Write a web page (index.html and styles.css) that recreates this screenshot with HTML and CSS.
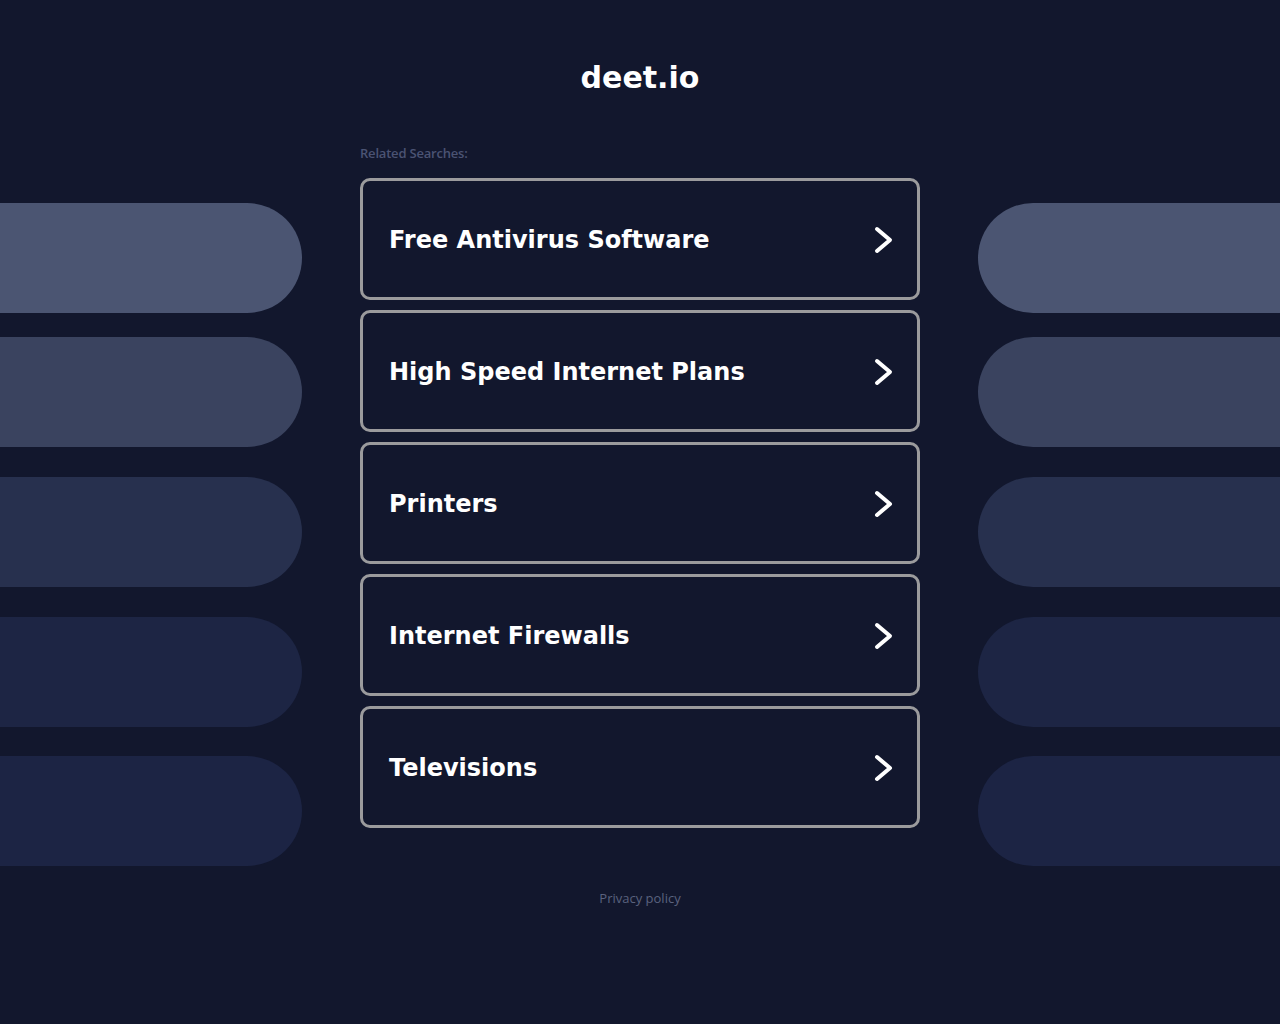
FILE: index.html
```html
<!DOCTYPE html>
<html>
<head>
	<title>deet.io</title>
	<link rel="stylesheet" href="styles.css">
</head>
<body>
<div class="page">
	<h1 class="title">deet.io</h1>

	<div class="layout">
		<ul class="pills pills-left">
			<li class="p1"></li>
			<li class="p2"></li>
			<li class="p3"></li>
			<li class="p4"></li>
			<li class="p5"></li>
		</ul>

		<div class="main">
			<p class="label">Related Searches:</p>
			<ul class="links">
				<li><a href="javascript:void(0)"><span>Free Antivirus Software</span><svg class="arrow" viewBox="0 0 20 28"><polyline points="4,3 17,14 4,25"/></svg></a></li>
				<li><a href="javascript:void(0)"><span>High Speed Internet Plans</span><svg class="arrow" viewBox="0 0 20 28"><polyline points="4,3 17,14 4,25"/></svg></a></li>
				<li><a href="javascript:void(0)"><span>Printers</span><svg class="arrow" viewBox="0 0 20 28"><polyline points="4,3 17,14 4,25"/></svg></a></li>
				<li><a href="javascript:void(0)"><span>Internet Firewalls</span><svg class="arrow" viewBox="0 0 20 28"><polyline points="4,3 17,14 4,25"/></svg></a></li>
				<li><a href="javascript:void(0)"><span>Televisions</span><svg class="arrow" viewBox="0 0 20 28"><polyline points="4,3 17,14 4,25"/></svg></a></li>
			</ul>
		</div>

		<ul class="pills pills-right">
			<li class="p1"></li>
			<li class="p2"></li>
			<li class="p3"></li>
			<li class="p4"></li>
			<li class="p5"></li>
		</ul>
	</div>

	<div class="footer">
		<a href="javascript:void(0)">Privacy policy</a>
	</div>
</div>
</body>
</html>
```

FILE: styles.css
```css
* {
	padding: 0px;
	margin: 0px;
}
li {
	list-style: none;
}
body {
	background: #12172d;
	font-family: "DejaVu Sans", sans-serif;
	color: #fff;
}

.title {
	padding-top: 60px;
	height: 36px;
	line-height: 36px;
	margin-bottom: 49px;
	text-align: center;
	font-size: 30px;
	font-weight: bold;
}

.layout {
	display: grid;
	grid-template-columns: 1fr 560px 1fr;
	column-gap: 58px;
}

/* side decoration */
.pills {
	padding-top: 58px;
	display: flex;
	flex-direction: column;
	gap: 30px;
}
.pills li {
	height: 110px;
}
.pills .p2 {
	margin-top: -6px;
}
.pills .p5 {
	margin-top: -1px;
}
.pills-left li {
	border-radius: 0 55px 55px 0;
}
.pills-right li {
	border-radius: 55px 0 0 55px;
}
.pills .p1 { background: #4b5572; }
.pills .p2 { background: #3a435f; }
.pills .p3 { background: #27304e; }
.pills .p4 { background: #1d2544; }
.pills .p5 { background: #1c2444; }

.main .label {
	height: 16px;
	line-height: 16px;
	margin-bottom: 17px;
	font-family: "Open Sans", sans-serif;
	font-size: 13px;
	font-weight: 600;
	letter-spacing: -0.2px;
	color: #4b5373;
}
.links {
	display: flex;
	flex-direction: column;
	gap: 10px;
}
.links a {
	display: flex;
	align-items: center;
	justify-content: space-between;
	height: 114px;
	padding: 2px 26px 0;
	border: 3px solid #9b9b9d;
	border-radius: 10px;
	color: #fff;
	text-decoration: none;
	font-size: 24px;
	font-weight: bold;
}
.links .arrow {
	width: 20px;
	height: 28px;
	margin-right: -2px;
}
.links .arrow polyline {
	fill: none;
	stroke: #fff;
	stroke-width: 4;
	stroke-linecap: round;
	stroke-linejoin: round;
}

.footer {
	padding-top: 23px;
	text-align: center;
	font-family: "Open Sans", sans-serif;
	font-size: 13px;
	line-height: 18px;
}
.footer a {
	color: #5a627e;
	text-decoration: none;
}
```
